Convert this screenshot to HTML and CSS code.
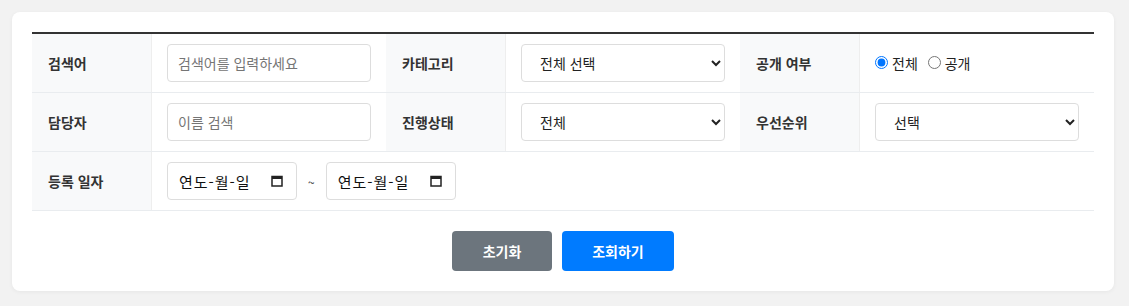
FILE: index.html
```html
<!DOCTYPE html>
<html lang="ko">
<head>
  <meta charset="UTF-8">
  <title>검색 조건</title>
  <link rel="stylesheet" href="styles.css">
</head>
<body>

  <div class="search-box">
    <table class="search-table">
      <tr>
        <th>검색어</th>
        <td><input type="text" class="field" placeholder="검색어를 입력하세요"></td>
        <th>카테고리</th>
        <td>
          <select class="field">
            <option>전체 선택</option>
          </select>
        </td>
        <th>공개 여부</th>
        <td>
          <label class="radio"><input type="radio" name="open" checked>전체</label>
          <label class="radio"><input type="radio" name="open">공개</label>
        </td>
      </tr>
      <tr>
        <th>담당자</th>
        <td><input type="text" class="field" placeholder="이름 검색"></td>
        <th>진행상태</th>
        <td>
          <select class="field">
            <option>전체</option>
          </select>
        </td>
        <th>우선순위</th>
        <td>
          <select class="field">
            <option>선택</option>
          </select>
        </td>
      </tr>
      <tr>
        <th>등록 일자</th>
        <td colspan="5">
          <div class="date-range">
            <div class="field date">
              <span>연도-월-일</span>
              <svg class="cal-icon" width="12" height="12" viewBox="0 0 12 12">
                <rect x="1" y="1.5" width="10" height="9.5" fill="none" stroke="#222" stroke-width="1.5"/>
                <rect x="1" y="1" width="10" height="3" fill="#222"/>
              </svg>
            </div>
            <span class="tilde">~</span>
            <div class="field date">
              <span>연도-월-일</span>
              <svg class="cal-icon" width="12" height="12" viewBox="0 0 12 12">
                <rect x="1" y="1.5" width="10" height="9.5" fill="none" stroke="#222" stroke-width="1.5"/>
                <rect x="1" y="1" width="10" height="3" fill="#222"/>
              </svg>
            </div>
          </div>
        </td>
      </tr>
    </table>

    <div class="btn-area">
      <button class="btn btn-reset">초기화</button>
      <button class="btn btn-search">조회하기</button>
    </div>
  </div>

</body>
</html>
```

FILE: styles.css
```css
body {
  margin: 0;
  padding: 12px 15px 12px 12px;
  background: #f2f2f2;
  font-family: "Noto Sans CJK KR", "Noto Sans", sans-serif;
  font-size: 14px;
  color: #333;
}

.search-box {
  background: #ffffff;
  border-radius: 8px;
  padding: 20px;
  box-shadow: 0 1px 4px rgba(0, 0, 0, 0.05);
}

.search-table {
  width: 100%;
  border-collapse: collapse;
  border-top: 2px solid #333;
  table-layout: fixed;
}

.search-table th,
.search-table td {
  border-bottom: 1px solid #e9ecef;
  height: 38px;
  padding: 10px 15px;
}

.search-table th {
  width: 88px;
  padding-left: 16px;
  background: #f8f9fa;
  text-align: left;
  font-weight: bold;
  font-size: 14px;
  color: #333;
  border-right: 1px solid #eeeeee;
}

.field {
  box-sizing: border-box;
  width: 204px;
  height: 38px;
  padding: 6px 10px;
  border: 1px solid #dddddd;
  border-radius: 4px;
  background: #fff;
  font-family: "Noto Sans CJK KR", sans-serif;
  font-size: 14px;
  color: #222;
  outline: none;
}

.field::placeholder {
  color: #757575;
}

select.field {
  padding-left: 14px;
}

.date-range {
  display: flex;
  align-items: center;
}

.field.date {
  width: 130px;
  display: flex;
  align-items: center;
  justify-content: space-between;
  padding: 0 13px 0 11px;
  font-size: 15px;
  letter-spacing: 1px;
  color: #111;
}

.cal-icon {
  display: block;
}

.tilde {
  margin: 0 11px;
  font-size: 12px;
}

.radio {
  display: inline-flex;
  align-items: center;
  margin-right: 6px;
  font-size: 14px;
  color: #222;
}

.radio input {
  margin: 0 4px 0 0;
}

.btn-area {
  display: flex;
  justify-content: center;
  gap: 10px;
  margin-top: 20px;
}

.btn {
  height: 40px;
  border: none;
  border-radius: 4px;
  color: #fff;
  font-family: "Noto Sans CJK KR", sans-serif;
  font-size: 14px;
  font-weight: bold;
  cursor: pointer;
}

.btn-reset {
  width: 100px;
  background: #6c757d;
}

.btn-search {
  width: 112px;
  background: #007bff;
}
```
